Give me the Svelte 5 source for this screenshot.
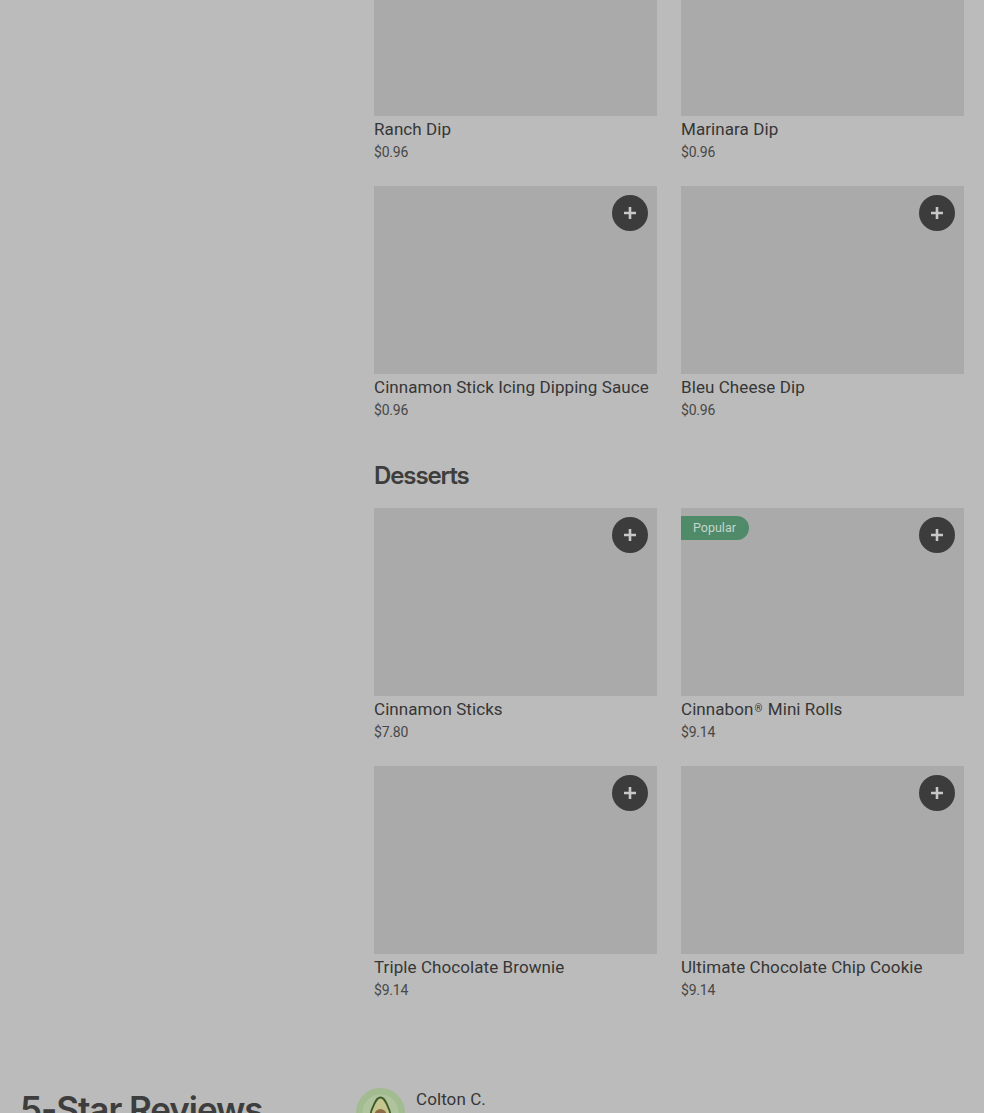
<script>
  const groups = [
    { items: [
      { name: 'Ranch Dip', price: '$0.96', noBtn: true },
      { name: 'Marinara Dip', price: '$0.96', noBtn: true },
      { name: 'Cinnamon Stick Icing Dipping Sauce', price: '$0.96' },
      { name: 'Bleu Cheese Dip', price: '$0.96' }
    ]},
    { title: 'Desserts', items: [
      { name: 'Cinnamon Sticks', price: '$7.80' },
      { name: 'Cinnabon', mark: '®', rest: ' Mini Rolls', price: '$9.14', popular: true },
      { name: 'Triple Chocolate Brownie', price: '$9.14' },
      { name: 'Ultimate Chocolate Chip Cookie', price: '$9.14' }
    ]}
  ];
</script>

<div class="page">
  <div class="menu">
    {#each groups as g}
      <section class="group">
        {#if g.title}<h2>{g.title}</h2>{/if}
        <div class="grid">
          {#each g.items as it}
            <article class="card">
              <div class="thumb">
                {#if it.popular}<span class="badge">Popular</span>{/if}
                {#if !it.noBtn}
                  <button class="add" aria-label="Add {it.name}">
                    <svg width="14" height="14" viewBox="0 0 14 14"><path d="M7 1v12M1 7h12" stroke="currentColor" stroke-width="2.600" fill="none"/></svg>
                  </button>
                {/if}
              </div>
              <h3>{it.name}{#if it.mark}<span class="reg">{it.mark}</span>{it.rest}{/if}</h3>
              <p>{it.price}</p>
            </article>
          {/each}
        </div>
      </section>
    {/each}
  </div>

  <section class="reviews">
    <h2 class="rev-title">5-Star Reviews</h2>
    <div class="review">
      <svg class="avatar" width="49" height="49" viewBox="0 0 49 49">
        <circle cx="24.5" cy="24.5" r="24.5" fill="#a3bb90"/>
        <circle cx="24.5" cy="24.5" r="18" fill="#afc49c"/>
        <path d="M24.5 9.500c-4.500 0-6.500 7-9 13-2.500 7 2 15 9 15s11.500-8 9-15c-2.500-6-4.500-13-9-13z" fill="#c5c68e" stroke="#3f5a2c" stroke-width="1.800"/>
        <circle cx="24.500" cy="27" r="6" fill="#8d6a48"/>
      </svg>
      <span class="author">Colton C.</span>
    </div>
  </section>
</div>

<style>
  :global(body) {
    margin: 0;
    background: #bbbbbb;
  }
  .page {
    height: 1113px;
    overflow: hidden;
    background: #bbbbbb;
    color: #3d3d3d;
    font-family: Roboto, "Liberation Sans", sans-serif;
  }
  .menu {
    margin: -72px 20px 0 374px;
  }
  .group + .group {
    margin-top: 16px;
  }
  h2 {
    margin: 0 0 16px;
    font: 600 24px/32px Inter, sans-serif;
    letter-spacing: -1.1px;
  }
  .grid {
    display: grid;
    grid-template-columns: 283px 283px;
    column-gap: 24px;
    row-gap: 0;
  }
  .card {
    height: 258px;
  }
  .thumb {
    position: relative;
    height: 188px;
    background: #aaaaaa;
  }
  h3 {
    margin: 1px 0 0;
    font-size: 17px;
    font-weight: 450;
    line-height: 24px;
    letter-spacing: 0.08px;
    color: #363636;
  }
  .reg {
    font-size: 10px;
    vertical-align: 3px;
    margin: 0 1px;
  }
  p {
    margin: 0;
    padding-top: 1px;
    font-size: 14px;
    line-height: 20px;
    letter-spacing: -0.2px;
    color: #484848;
  }
  .add {
    position: absolute;
    top: 9px;
    right: 9px;
    width: 36px;
    height: 36px;
    padding: 0;
    border: 0;
    border-radius: 50%;
    display: flex;
    align-items: center;
    justify-content: center;
    background: #3c3c3c;
    color: #c8c8c8;
  }
  .badge {
    position: absolute;
    top: 8px;
    left: 0;
    box-sizing: border-box;
    height: 24px;
    padding: 0 13px 2px 12px;
    display: flex;
    align-items: center;
    background: #4f8a69;
    color: #c4d6cb;
    font-size: 12.500px;
    border-radius: 0 12px 12px 0;
  }
  .reviews {
    display: flex;
    margin: 64px 20px 0;
    align-items: flex-start;
  }
  .rev-title {
    flex: 0 0 336px;
    margin: 0;
    font-size: 35px;
    line-height: 40px;
    padding-top: 1px;
    letter-spacing: -1.060px;
  }
  .review {
    display: flex;
    gap: 11px;
    align-items: flex-start;
  }
  .avatar {
    flex: none;
  }
  .author {
    font-size: 17px;
    font-weight: 450;
    line-height: 22px;
    letter-spacing: 0.08px;
    color: #363636;
  }
</style>
